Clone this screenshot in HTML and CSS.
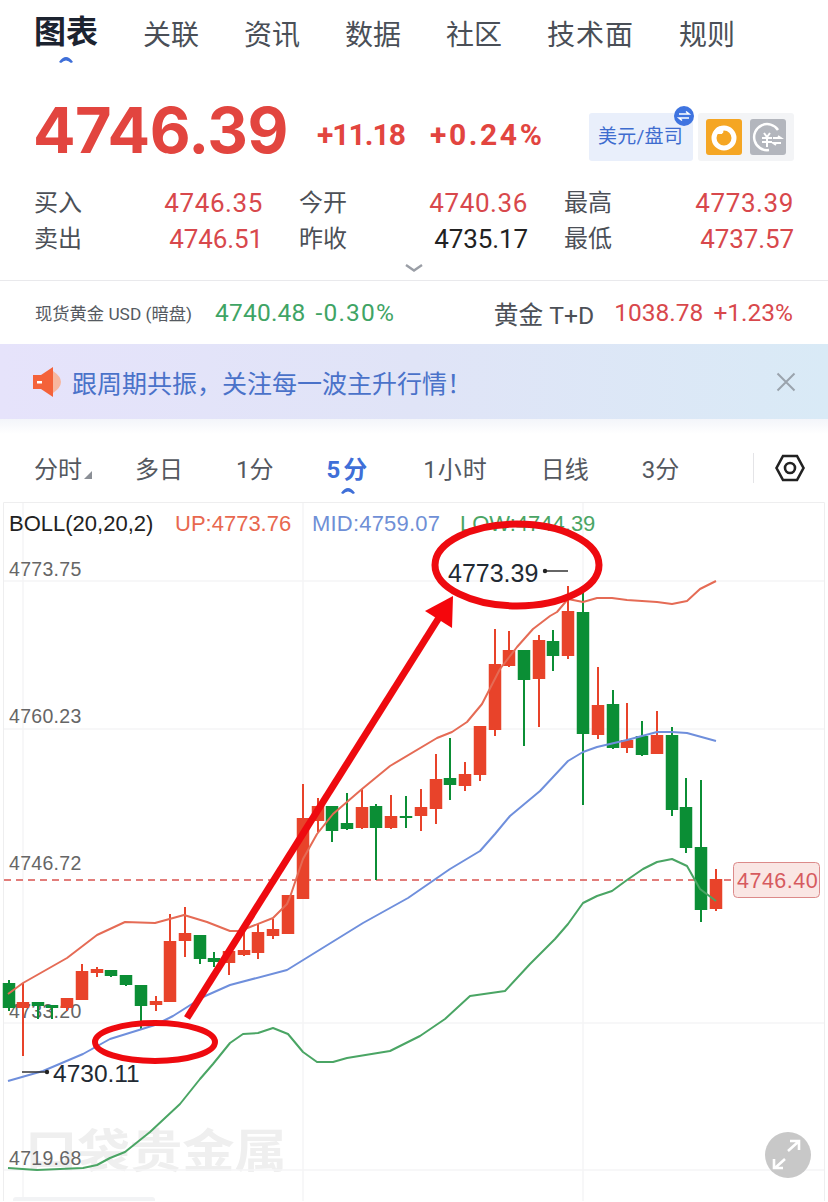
FILE: index.html
```html
<!DOCTYPE html>
<html lang="zh-CN">
<head>
    <meta charset="UTF-8">
    <meta name="viewport" content="width=device-width, initial-scale=1.0">
    <title>现货黄金</title>
    <link rel="stylesheet" href="styles.css">
</head>
<body>
    <nav class="tabs">
        <a class="tab tab-active">图表
            <svg class="caret" width="16" height="10" viewBox="0 0 16 10"><path d="M1 8 Q8 -2 15 8 L13 9 Q8 4 3 9 Z"/></svg>
        </a>
        <a class="tab">关联</a>
        <a class="tab">资讯</a>
        <a class="tab">数据</a>
        <a class="tab">社区</a>
        <a class="tab tab-wide">技术面</a>
        <a class="tab">规则</a>
    </nav>

    <section class="quote">
        <div class="price">4746.39</div>
        <div class="change">+11.18</div>
        <div class="change change-pct">+0.24%</div>
        <div class="unit">美元/盘司
            <svg class="unit-badge" width="20" height="20" viewBox="0 0 20 20">
                <circle cx="10" cy="10" r="10" fill="#3f74e0"/>
                <path d="M5 8H15L12 5.5M15 12H5L8 14.5" fill="none" stroke="#fff" stroke-width="1.6"/>
            </svg>
        </div>
        <div class="switches">
            <svg width="36" height="36" viewBox="0 0 36 36">
                <rect width="36" height="36" rx="3" fill="#f5a623"/>
                <circle cx="18" cy="19" r="10" fill="none" stroke="#fff" stroke-width="5"/>
                <path d="M7 15 Q9 6 18 7 L17 15 Z" fill="#fff"/>
                <path d="M17 14V20H12" fill="none" stroke="#f5a623" stroke-width="1.5"/>
            </svg>
            <svg width="36" height="36" viewBox="0 0 36 36">
                <rect width="36" height="36" rx="3" fill="#b3b6bd"/>
                <path d="M28 11 A13 13 0 1 0 19 31" fill="none" stroke="#fff" stroke-width="2.5"/>
                <path d="M14 14L17 18L20 14M12 19H22M12 23H22M17 18V28" fill="none" stroke="#fff" stroke-width="2"/>
                <path d="M23 19H31L28 17M31 24H23L26 26" fill="none" stroke="#fff" stroke-width="1.8"/>
            </svg>
        </div>
    </section>

    <section class="stats">
        <div class="stat"><span class="stat-label">买入</span><span class="up">4746.35</span></div>
        <div class="stat"><span class="stat-label">今开</span><span class="up">4740.36</span></div>
        <div class="stat"><span class="stat-label">最高</span><span class="up">4773.39</span></div>
        <div class="stat"><span class="stat-label">卖出</span><span class="up narrow">4746.51</span></div>
        <div class="stat"><span class="stat-label">昨收</span><span class="flat narrow">4735.17</span></div>
        <div class="stat"><span class="stat-label">最低</span><span class="up narrow">4737.57</span></div>
    </section>

    <div class="more">
        <svg width="20" height="10" viewBox="0 0 20 10"><path d="M2 2L10 7.5L18 2" fill="none" stroke="#9a9ea6" stroke-width="2.4"/></svg>
    </div>

    <section class="related">
        <div class="related-item">
            <span class="related-small">现货黄金 USD (暗盘)</span>
            <span class="related-num related-wide down">4740.48</span>
            <span class="related-num related-pct down">-0.30%</span>
        </div>
        <div class="related-item">
            <span class="related-name">黄金 T+D</span>
            <span class="related-num up">1038.78</span>
            <span class="related-num up">+1.23%</span>
        </div>
    </section>

    <section class="banner">
        <svg class="banner-icon" width="28" height="32" viewBox="0 0 28 32">
            <path d="M20 5 Q36 16 20 27" fill="#f7b79f"/>
            <path d="M0 9H8L20 1V31L8 23H0Z" fill="#f4623a"/>
            <rect x="4" y="15" width="5" height="2.5" fill="#fff"/>
        </svg>
        <span class="banner-text">跟周期共振，关注每一波主升行情！</span>
        <svg class="banner-close" width="20" height="20" viewBox="0 0 20 20"><path d="M1.5 1.5L18.5 18.5M18.5 1.5L1.5 18.5" stroke="#9aa3ad" stroke-width="2"/></svg>
    </section>
    <div class="banner-fade"></div>

    <section class="periods">
        <a class="period period-menu">分时</a>
        <a class="period">多日</a>
        <a class="period">1分</a>
        <a class="period period-active">5分
            <svg class="caret" width="16" height="10" viewBox="0 0 16 10"><path d="M1 8 Q8 -2 15 8 L13 9 Q8 4 3 9 Z"/></svg>
        </a>
        <a class="period period-hour">1小时</a>
        <a class="period">日线</a>
        <a class="period">3分</a>
        <span class="period-line"></span>
        <svg class="period-set" width="30" height="28" viewBox="0 0 30 28">
            <path d="M8 2H22L28.5 14L22 26H8L1.5 14Z" fill="none" stroke="#222" stroke-width="2.6"/>
            <circle cx="15" cy="14" r="5" fill="none" stroke="#222" stroke-width="2.6"/>
        </svg>
    </section>

    <div class="chart">
        <svg width="828" height="700" viewBox="0 502 828 700">
            <text class="watermark" x="25" y="1168" textLength="262" lengthAdjust="spacingAndGlyphs">口袋贵金属</text>

            <!-- grid -->
            <path class="frame" d="M3.5 1202V503.5H824.5V1202"/>
            <path class="grid" d="M23 504V1202M303 504V1202M583 504V1202M4 582H824M4 730H824M4 1024H824M4 1171H824"/>
            <rect class="strip" x="13" y="1198" width="142" height="6" rx="3"/>

            <!-- legend -->
            <text class="legend" x="9" y="532">BOLL(20,20,2)</text>
            <text class="legend legend-up" x="175" y="532">UP:4773.76</text>
            <text class="legend legend-mid" x="312" y="532">MID:4759.07</text>
            <text class="legend legend-low" x="460" y="532">LOW:4744.39</text>

            <!-- price axis -->
            <text class="axis" x="9" y="577">4773.75</text>
            <text class="axis" x="9" y="724">4760.23</text>
            <text class="axis" x="9" y="871">4746.72</text>
            <text class="axis" x="9" y="1019">4733.20</text>
            <text class="axis" x="9" y="1166">4719.68</text>

            <path class="last-line" d="M4 881H733"/>

            <!-- candles -->
            <path class="wick wick-red" d="M23 984V1057M67 999V1012M82 965V1001M97 968V978M156 997V1012M170 915V1003M185 908V958M229 952V976M244 930V957M258 925V960M273 920V940M288 896V935M303 785V900M318 799V833M362 790V830M391 796V830M421 790V832M436 755V825M465 763V792M480 727V782M495 630V737M509 632V668M539 636V728M568 587V660M598 668V740M627 704V754M657 712V755M716 870V912"/>
            <path class="body body-red" d="M23 1003V1009M67 999V1009M82 972V1001M97 970V974M156 1002V1006M170 942V1003M185 934V942M229 952V964M244 951V956M258 933V954M273 930V937M288 896V935M303 819V900M318 807V822M362 808V829M391 817V829M421 808V817M436 780V810M465 775V787M480 727V776M495 665V731M509 651V667M539 641V680M568 612V657M598 706V736M627 741V749M657 736V755M716 880V910"/>
            <path class="wick wick-green" d="M9 981V1012M38 1003V1020M52 1006V1020M111 971V978M126 976V987M141 986V1030M200 936V965M214 953V968M332 807V843M347 794V831M376 805V881M406 797V829M450 739V801M524 651V747M553 631V672M583 590V806M613 691V750M642 722V757M672 728V817M686 779V854M701 781V923"/>
            <path class="body body-green" d="M9 984V1009M38 1003V1007M52 1006V1009M111 971V977M126 976V986M141 986V1007M200 936V960M214 959V963M332 807V832M347 824V830M376 807V829M406 817V819M450 779V786M524 651V681M553 642V657M583 613V735M613 705V749M642 737V756M672 736V811M686 808V849M701 848V911"/>

            <!-- bands -->
            <polyline class="band band-up" points="8,995 23,984 67,959 97,936 125,923 155,924 184,916 207,923 230,932 240,932 273,919 287,905 290,898 303,860 317,835 333,815 362,790 390,767 437,739 452,733 467,723 482,705 500,670 517,648 533,630 550,617 557,613 568,600 583,603 597,599 612,599 627,601 657,603 672,605 687,602 700,590 716,582"/>
            <polyline class="band band-mid" points="8,1082 43,1072 83,1055 110,1040 155,1026 173,1017 203,998 230,986 287,971 363,924 408,899 450,870 480,852 495,835 510,817 540,792 568,762 583,753 597,748 627,741 657,733 672,733 687,734 716,742"/>
            <polyline class="band band-low" points="8,1169 37,1171 83,1169 97,1166 110,1159 125,1153 150,1133 180,1105 200,1080 213,1065 230,1044 243,1035 258,1034 273,1029 288,1035 303,1053 317,1063 333,1063 347,1059 390,1052 420,1037 445,1020 470,997 505,992 530,965 555,940 568,925 583,904 597,897 612,892 627,881 643,870 657,863 672,860 687,867 700,890 716,902"/>

            <!-- last price tag -->
            <rect class="last-tag" x="733.5" y="863.5" width="86" height="35" rx="4"/>
            <text class="last-text" x="737" y="889">4746.40</text>

            <!-- high / low marks -->
            <text class="mark" x="448" y="583">4773.39</text>
            <path class="mark-line" d="M545 572H568"/>
            <circle class="mark-dot" cx="545" cy="572" r="2.2"/>
            <text class="mark mark-low" x="53" y="1083">4730.11</text>
            <path class="mark-line" d="M22 1073H47"/>
            <circle class="mark-dot" cx="47" cy="1073" r="2.2"/>

            <!-- hand drawn notes -->
            <ellipse class="note" cx="517" cy="566" rx="82" ry="41"/>
            <ellipse class="note note-thin" cx="155" cy="1043" rx="60" ry="19"/>
            <path class="note" d="M187 1019L440 617"/>
            <path class="note-head" d="M453 597L425 612L452 629Z"/>

            <!-- fullscreen -->
            <circle class="expand" cx="788" cy="1156" r="23"/>
            <path class="expand-arrow" d="M788 1152L798 1143M790 1142H799V1151M785 1160L775 1169M774 1160V1169H783"/>
        </svg>
    </div>
</body>
</html>
```

FILE: styles.css
```css
* {
    margin: 0;
    padding: 0;
    box-sizing: border-box;
}

body {
    width: 828px;
    height: 1202px;
    overflow: hidden;
    background: #fff;
    color: #333;
    font-family: Roboto, "Noto Sans CJK SC", sans-serif;
}

.up { color: #d8484c; }
.down { color: #3fa465; }
.flat { color: #222; }

/* top tabs */
.tabs {
    display: flex;
    align-items: baseline;
    gap: 45px;
    height: 85px;
    padding: 10px 0 0 34px;
}

.tab {
    position: relative;
    font-size: 28px;
    line-height: 48px;
    color: #4a4f57;
}

.tab-wide {
    letter-spacing: 1px;
}

.tab-active {
    top: -2px;
    font-size: 32px;
    font-weight: 700;
    color: #1c2330;
}

.caret {
    position: absolute;
    left: 50%;
    bottom: -8px;
    margin-left: -8px;
    fill: #3f6fd8;
}

/* price */
.quote {
    display: flex;
    align-items: center;
    height: 99px;
    padding: 0 34px 9px 35px;
}

.price {
    flex: 0 0 284px;
    margin-left: -2px;
    font-family: Inter, sans-serif;
    font-size: 63px;
    font-weight: 700;
    letter-spacing: -0.5px;
    color: #e2453f;
}

.change {
    flex: 0 0 113px;
    margin-top: 8px;
    font-family: Roboto, sans-serif;
    font-size: 30px;
    font-weight: 700;
    letter-spacing: -1px;
    color: #e2453f;
}

.change-pct {
    flex: 0 0 159px;
    letter-spacing: 2.6px;
}

.unit {
    position: relative;
    flex: 0 0 104px;
    height: 48px;
    margin-top: 14px;
    line-height: 48px;
    padding-left: 9px;
    border-radius: 3px;
    background: #e9effb;
    color: #3e6ccf;
    font-size: 19px;
    letter-spacing: 0.2px;
    white-space: nowrap;
}

.unit-badge {
    position: absolute;
    top: -7px;
    right: -1px;
}

.switches {
    display: flex;
    align-items: center;
    gap: 8px;
    flex: 0 0 96px;
    height: 48px;
    margin: 14px 0 0 5px;
    padding: 0 8px;
    border-radius: 3px;
    background: #f3f4f6;
}

/* open / high / low */
.stats {
    display: grid;
    grid-template-columns: 228px 228px 229px;
    column-gap: 37px;
    padding-left: 35px;
}

.stat {
    display: flex;
    justify-content: space-between;
    align-items: center;
    height: 36px;
    padding-top: 1px;
    font-size: 26px;
    letter-spacing: 0.6px;
}

.narrow {
    letter-spacing: -0.1px;
}

.stat-label {
    margin-left: -1px;
    padding-bottom: 5px;
    font-size: 24px;
    letter-spacing: 0;
    color: #4c5057;
}

.more {
    display: flex;
    justify-content: center;
    align-items: center;
    height: 25px;
    border-bottom: 1px solid #e9e9ec;
}

/* related quotes */
.related {
    display: flex;
    justify-content: space-between;
    align-items: center;
    height: 63px;
    padding: 0 35px;
}

.related-item {
    display: flex;
    align-items: center;
    gap: 10px;
}

.related-small {
    margin-right: 13px;
    font-size: 17.3px;
    color: #555a61;
}

.related-name {
    margin-right: 10px;
    font-size: 24.7px;
    color: #4c5057;
}

.related-num {
    font-size: 24.5px;
}

.related-wide {
    letter-spacing: 0.2px;
}

.related-pct {
    letter-spacing: 1.2px;
}

/* notice */
.banner {
    display: flex;
    align-items: center;
    height: 75px;
    padding: 0 32px 0 33px;
    background: linear-gradient(90deg, #e6e3fb 0%, #e0e4f7 50%, #d9eaf6 100%);
}

.banner-text {
    flex: 1;
    margin-left: 11px;
    font-size: 25px;
    color: #4a72c9;
}

.banner-fade {
    height: 15px;
    background: linear-gradient(180deg, #f3f5fa, #fff);
}

/* period switch */
.periods {
    display: flex;
    align-items: center;
    gap: 53px;
    height: 67px;
    padding-left: 34px;
}

.period {
    position: relative;
    font-size: 24px;
    color: #54585f;
}

.period-menu::after {
    content: '';
    position: absolute;
    right: -10px;
    bottom: 6px;
    border-style: solid;
    border-width: 0 0 8px 8px;
    border-color: transparent transparent #8b8f96 transparent;
}

.period-active {
    font-weight: 700;
    letter-spacing: 3px;
    color: #3f6fd8;
}

.period-active .caret {
    bottom: -10px;
}

.period-hour {
    letter-spacing: 1px;
}

.period-line {
    width: 1px;
    height: 30px;
    margin-left: 21px;
    background: #e4e4e7;
}

.period-set {
    margin-left: -32px;
}

/* chart */
.chart svg {
    display: block;
}

.chart text {
    font-family: "Liberation Sans", sans-serif;
}

.chart .watermark {
    font-family: "Noto Sans CJK SC", sans-serif;
    font-size: 46px;
    font-weight: 700;
    fill: #efefef;
}

.frame {
    fill: none;
    stroke: #eeeeef;
}

.grid {
    fill: none;
    stroke: #f5f5f6;
    stroke-width: 1.5;
}

.strip {
    fill: #f2f3f5;
}

.legend {
    font-size: 22px;
    fill: #222;
}

.legend-up { fill: #e8684f; }
.legend-mid { fill: #6f8fd6; letter-spacing: 0.2px; }
.legend-low { fill: #4aa564; }

.axis {
    font-size: 19.5px;
    letter-spacing: 0.3px;
    fill: #666;
}

.last-line {
    stroke: #d9534f;
    stroke-width: 1.6;
    stroke-dasharray: 7 5;
}

.wick { fill: none; stroke-width: 2; }
.body { fill: none; stroke-width: 12.5; }
.wick-red, .body-red { stroke: #e8432a; }
.wick-green, .body-green { stroke: #0b8e35; }

.band {
    fill: none;
    stroke-width: 2;
    stroke-linejoin: round;
}

.band-up { stroke: #e56b55; }
.band-mid { stroke: #6f8fdc; }
.band-low { stroke: #4aa564; }

.last-tag {
    fill: #fae6e4;
    stroke: #dc8a8a;
    stroke-width: 1;
}

.chart .last-text {
    font-size: 21.5px;
    letter-spacing: 0.5px;
    fill: #d65a5f;
}

.mark {
    font-size: 25px;
    fill: #222a33;
}

.mark-low {
    font-size: 24.5px;
}

.mark-line {
    stroke: #333;
    stroke-width: 1.5;
}

.mark-dot {
    fill: #222;
}

.note {
    fill: none;
    stroke: #ee0a0f;
    stroke-width: 7;
}

.note-thin {
    stroke-width: 6;
}

.note-head {
    fill: #f5060c;
}

.expand {
    fill: #c8c8c8;
}

.expand-arrow {
    fill: none;
    stroke: #fff;
    stroke-width: 2.6;
}
```
